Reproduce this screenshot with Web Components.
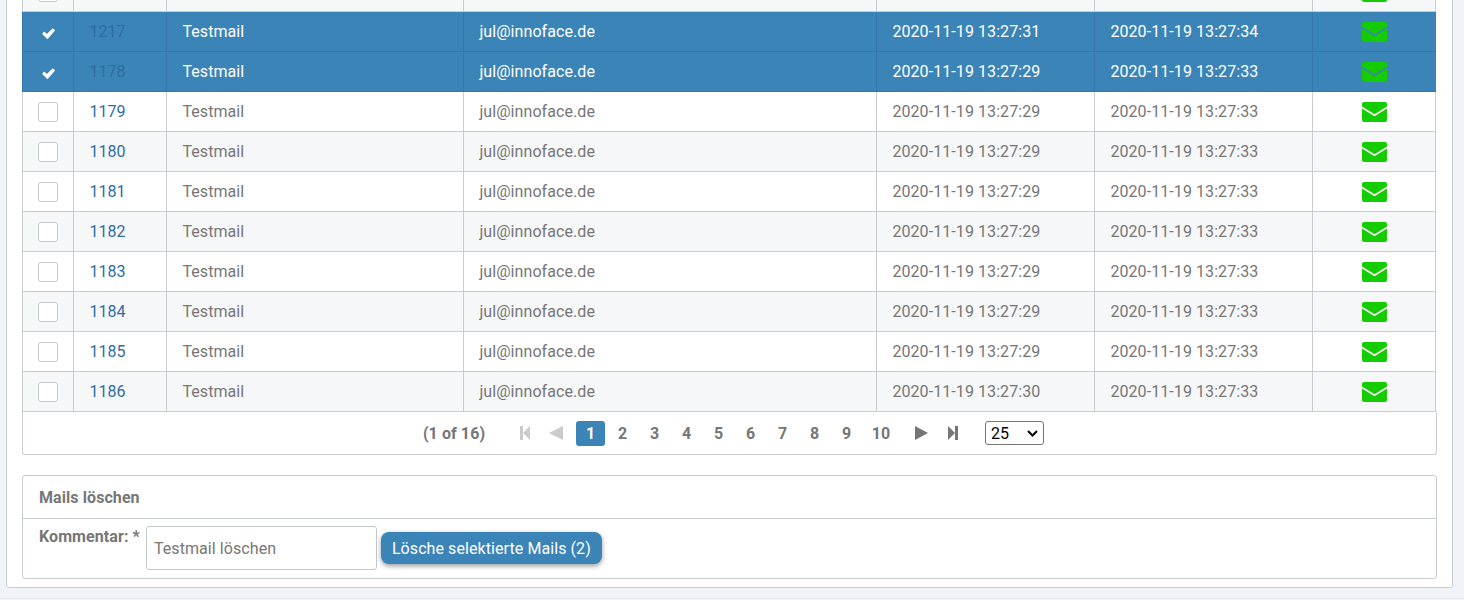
<!DOCTYPE html>
<html>
<head>
<meta charset="utf-8">
<title>Mails</title>
<style>
  html, body { margin: 0; height: 600px; overflow: hidden; background: #f0f4f8; }
  body { font-family: Roboto, "Liberation Sans", sans-serif; font-size: 16px; letter-spacing: .08px; color: #767676; }
</style>
</head>
<body>
<mail-page>
  <mail-table id="table"></mail-table>
  <mail-paginator></mail-paginator>
  <delete-panel></delete-panel>
</mail-page>

<script>
class MailPage extends HTMLElement {
  constructor() {
    super();
    this.attachShadow({ mode: 'open' });
    this.shadowRoot.innerHTML = `
      <style>
        :host { display: flow-root; height: 598px; border-bottom: 1px solid #e2e6ea; }
        .card {
          box-sizing: border-box;
          width: 1447px;
          height: 617px;
          margin: -29px 0 0 6px;
          padding: 0 15px 0;
          background: #fff;
          border: 1px solid #c9cdd2;
          border-radius: 3px;
        }
      </style>
      <div class="card"><slot></slot></div>
    `;
  }
}

class MailCheck extends HTMLElement {
  constructor() {
    super();
    this.attachShadow({ mode: 'open' });
    this.shadowRoot.innerHTML = `
      <style>
        :host { display: block; width: 20px; height: 20px; box-sizing: border-box; border: 1px solid #c4c8ce; border-radius: 3px; background: #fff; }
        :host([checked]) { border-color: transparent; background: transparent; }
        svg { display: none; width: 13px; height: 11px; margin: 5px 3px; }
        :host([checked]) svg { display: block; }
      </style>
      <svg viewBox="0 0 14 12"><path fill="#fff" d="M5.2 11.6 .4 6.8a.9.9 0 0 1 0-1.2L1.7 4.3a.9.9 0 0 1 1.2 0l2.3 2.3L11 .7a.9.9 0 0 1 1.2 0l1.4 1.3a.9.9 0 0 1 0 1.2L6.4 11.6a.9.9 0 0 1-1.2 0z"/></svg>
    `;
  }
}

class MailRow extends HTMLElement {
  constructor() {
    super();
    this.attachShadow({ mode: 'open' });
    this.shadowRoot.innerHTML = `
      <style>
        :host {
          display: grid;
          grid-template-columns: 51px 93px 297px 413px 218px 218px 124px;
          height: 40px;
          box-sizing: border-box;
          border-bottom: 1px solid #c9cdd2;
          background: #fff;
          color: #767676;
        }
        :host(.even) { background: #f6f7f9; }
        :host([selected]) { background: #3a84b8; color: #fff; border-bottom-color: #3378a8; }
        .cell {
          box-sizing: border-box;
          display: flex;
          align-items: center;
          padding: 0 15px 0 15.4px;
          border-left: 1px solid #c9cdd2;
          white-space: nowrap;
        }
        .cell:first-child { padding: 0 0 0 15px; }
        .cell:last-child { border-right: 1px solid #c9cdd2; justify-content: center; padding: 0; }
        :host([selected]) .cell { border-color: #3378a8; }
        :host([selected]) .cell:first-child { border-left-color: #3a84b8; }
        :host([selected]) .cell:last-child { border-right-color: #3a84b8; }
        .id { color: #2f6c9f; }
        :host([selected]) .id { color: #2f6d9c; }
        .env { width: 25px; height: 20px; display: block; }
      </style>
      <div class="cell"><mail-check></mail-check></div>
      <div class="cell id"></div>
      <div class="cell subject"></div>
      <div class="cell to"></div>
      <div class="cell created"></div>
      <div class="cell sent"></div>
      <div class="cell">
        <svg class="env" viewBox="0 0 25 20"><path fill="#14cc00" d="M0 2a2 2 0 0 1 2-2h21a2 2 0 0 1 2 2v2.6l-12.5 7.6L0 4.6z"/><path fill="#14cc00" d="M0 6.6l12.5 7.6L25 6.6V18a2 2 0 0 1-2 2H2a2 2 0 0 1-2-2z"/></svg>
      </div>
    `;
  }

  connectedCallback() {
    const root = this.shadowRoot;
    root.querySelector('.id').textContent = this.getAttribute('mail-id');
    root.querySelector('.subject').textContent = this.getAttribute('subject');
    root.querySelector('.to').textContent = this.getAttribute('to');
    root.querySelector('.created').textContent = this.getAttribute('created');
    root.querySelector('.sent').textContent = this.getAttribute('sent');
    if (this.hasAttribute('selected')) {
      root.querySelector('mail-check').setAttribute('checked', '');
    }
  }
}

class MailTable extends HTMLElement {
  constructor() {
    super();
    this.attachShadow({ mode: 'open' });
    this.shadowRoot.innerHTML = `
      <style>:host { display: block; width: 1414px; }</style>
      <slot></slot>
    `;
  }
}

class MailPaginator extends HTMLElement {
  constructor() {
    super();
    this.attachShadow({ mode: 'open' });
    const pages = [1, 2, 3, 4, 5, 6, 7, 8, 9, 10]
      .map(p => `<span class="page${p === 1 ? ' active' : ''}${p === 10 ? ' ten' : ''}">${p}</span>`)
      .join('');
    this.shadowRoot.innerHTML = `
      <style>
        :host {
          display: flex;
          align-items: center;
          justify-content: center;
          width: 1415px;
          height: 43px;
          box-sizing: border-box;
          border: 1px solid #c9cdd2;
          border-top: 0;
          border-radius: 0 0 3px 3px;
          font-weight: 700;
          color: #767676;
          padding-left: 8px;
        }
        .count { margin-right: 35px; }
        .page { width: 29px; height: 25px; line-height: 25px; text-align: center; margin-right: 3px; border-radius: 3px; }
        .page.ten { margin: 0 0 0 2.5px; }
        .active { background: #3a84b8; color: #fff; }
        svg { display: block; height: 14px; fill: currentColor; }
        .off { color: #cbcbcb; }
        .first { width: 10px; margin-right: 19px; }
        .prev { width: 14px; margin-right: 13px; }
        .next { width: 13px; margin: 0 19.5px; }
        .last { width: 10px; }
        .size { position: relative; display: block; margin-left: 27.5px; }
        select {
          display: block;
          appearance: none;
          width: 59px;
          height: 24px;
          font: 16px Roboto, "Liberation Sans", sans-serif;
          color: #000;
          background: #fff;
          border: 1px solid #767676;
          border-radius: 3px;
          padding: 0 0 0 5px;
        }
        .chev { position: absolute; right: 6px; top: 9px; width: 11px; height: 7px; fill: none; stroke: #000; stroke-width: 2; }
      </style>
      <span class="count">(1 of 16)</span>
      <svg class="first off" viewBox="0 0 10 14"><rect x="0" y="0" width="3" height="14"/><path d="M10 0v14L3 7z"/></svg>
      <svg class="prev off" viewBox="0 0 14 14"><path d="M14 0v14L0 7z"/></svg>
      ${pages}
      <svg class="next" viewBox="0 0 13 14"><path d="M0 0v14l13-7z"/></svg>
      <svg class="last" viewBox="0 0 10 14"><path d="M0 0v14l7-7z"/><rect x="7" y="0" width="3" height="14"/></svg>
      <span class="size">
        <select><option>25</option></select>
        <svg class="chev" viewBox="0 0 11 7"><path d="M1 1l4.5 4.5L10 1"/></svg>
      </span>
    `;
  }
}

class DeletePanel extends HTMLElement {
  constructor() {
    super();
    this.attachShadow({ mode: 'open' });
    this.shadowRoot.innerHTML = `
      <style>
        :host {
          display: block;
          box-sizing: border-box;
          width: 1415px;
          height: 104px;
          margin-top: 20px;
          border: 1px solid #c9cdd2;
          border-radius: 3px;
          color: #767676;
        }
        .head { height: 43px; box-sizing: border-box; padding: 12px 16px 0; font-weight: 700; border-bottom: 1px solid #c9cdd2; }
        .body { display: flex; align-items: flex-start; padding: 7px 0 0 16px; }
        label { font-weight: 700; margin: 1px 6px 0 0; white-space: nowrap; }
        input {
          box-sizing: border-box;
          width: 231px;
          height: 44px;
          padding: 0 7px;
          border: 1px solid #c4c8ce;
          border-radius: 3px;
          font: 16px Roboto, "Liberation Sans", sans-serif;
          letter-spacing: .08px;
          color: #767676;
          outline: none;
        }
        input::placeholder { color: #767676; }
        button {
          box-sizing: border-box;
          height: 32px;
          width: 221px;
          margin: 6px 0 0 4px;
          border: 0;
          border-radius: 8px;
          background: #3a84b8;
          color: #fff;
          font: 400 16px Roboto, "Liberation Sans", sans-serif;
          letter-spacing: .08px;
          box-shadow: 0 2px 5px rgba(0,0,0,.4);
          padding: 0;
        }
      </style>
      <div class="head">Mails löschen</div>
      <div class="body">
        <label>Kommentar: *</label>
        <input placeholder="Testmail löschen">
        <button>Lösche selektierte Mails (2)</button>
      </div>
    `;
  }
}

customElements.define('mail-page', MailPage);
customElements.define('mail-check', MailCheck);
customElements.define('mail-row', MailRow);
customElements.define('mail-table', MailTable);
customElements.define('mail-paginator', MailPaginator);
customElements.define('delete-panel', DeletePanel);

// first row is scrolled away, only its checkbox and envelope bottom still show
const rows = [
  ['', '', '', '', '', false],
  ['1217', 'Testmail', 'jul@innoface.de', '2020-11-19 13:27:31', '2020-11-19 13:27:34', true],
  ['1178', 'Testmail', 'jul@innoface.de', '2020-11-19 13:27:29', '2020-11-19 13:27:33', true],
  ['1179', 'Testmail', 'jul@innoface.de', '2020-11-19 13:27:29', '2020-11-19 13:27:33', false],
  ['1180', 'Testmail', 'jul@innoface.de', '2020-11-19 13:27:29', '2020-11-19 13:27:33', false],
  ['1181', 'Testmail', 'jul@innoface.de', '2020-11-19 13:27:29', '2020-11-19 13:27:33', false],
  ['1182', 'Testmail', 'jul@innoface.de', '2020-11-19 13:27:29', '2020-11-19 13:27:33', false],
  ['1183', 'Testmail', 'jul@innoface.de', '2020-11-19 13:27:29', '2020-11-19 13:27:33', false],
  ['1184', 'Testmail', 'jul@innoface.de', '2020-11-19 13:27:29', '2020-11-19 13:27:33', false],
  ['1185', 'Testmail', 'jul@innoface.de', '2020-11-19 13:27:29', '2020-11-19 13:27:33', false],
  ['1186', 'Testmail', 'jul@innoface.de', '2020-11-19 13:27:30', '2020-11-19 13:27:33', false]
];
const table = document.getElementById('table');
rows.forEach((r, i) => {
  const row = document.createElement('mail-row');
  row.setAttribute('mail-id', r[0]);
  row.setAttribute('subject', r[1]);
  row.setAttribute('to', r[2]);
  row.setAttribute('created', r[3]);
  row.setAttribute('sent', r[4]);
  if (r[5]) row.setAttribute('selected', '');
  if (i % 2 === 0) row.classList.add('even');
  table.appendChild(row);
});
</script>
</body>
</html>
